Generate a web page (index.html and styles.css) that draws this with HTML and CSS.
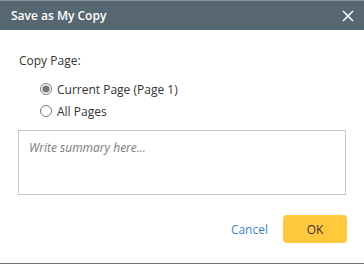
FILE: index.html
```html
<!DOCTYPE html>
<html lang="en">
<head>
    <meta charset="UTF-8">
    <title>Save as My Copy</title>
    <link rel="stylesheet" href="styles.css">
</head>
<body>
    <div class="dialog">
        <div class="dialog-header">
            <span class="dialog-title">Save as My Copy</span>
            <button class="close-button" aria-label="Close">
                <svg width="12" height="12" viewBox="0 0 12 12"><path d="M1 1L11 11M11 1L1 11" stroke="#fff" stroke-width="1.5"/></svg>
            </button>
        </div>
        <div class="dialog-body">
            <p class="field-label">Copy Page:</p>
            <div class="radio-group">
                <label class="radio-row"><input type="radio" name="page" checked> Current Page (Page 1)</label>
                <label class="radio-row"><input type="radio" name="page"> All Pages</label>
            </div>
            <textarea class="summary" placeholder="Write summary here..."></textarea>
        </div>
        <div class="dialog-footer">
            <button class="cancel-button">Cancel</button>
            <button class="ok-button">OK</button>
        </div>
    </div>
</body>
</html>
```

FILE: styles.css
```css
body {
    margin: 0;
    font-family: "Open Sans", Arial, sans-serif;
    background-color: #fff;
}
.dialog {
    width: 364px;
    height: 264px;
    border-top: 1px solid #8a969e;
    border-bottom: 1px solid #6d7377;
    box-sizing: border-box;
    display: flex;
    flex-direction: column;
}
.dialog-header {
    background-color: #566771;
    height: 29px;
    display: flex;
    align-items: center;
    justify-content: space-between;
    padding: 0 8px 0 11px;
}
.dialog-title {
    color: #fff;
    font-size: 12px;
    font-weight: 600;
}
.close-button {
    background: none;
    border: none;
    padding: 0;
    width: 16px;
    height: 16px;
    display: flex;
    align-items: center;
    justify-content: center;
    cursor: pointer;
}
.dialog-body {
    padding: 22px 18px 0 18px;
}
.field-label {
    margin: 0 0 0 1px;
    font-size: 12px;
    color: #333;
}
.radio-group {
    margin-top: 9px;
    padding-left: 22px;
}
.radio-row {
    display: flex;
    align-items: center;
    font-size: 12px;
    color: #333;
    height: 22px;
}
.radio-row input {
    margin: 0 5px 0 0;
    width: 12px;
    height: 12px;
    accent-color: #777;
}
.summary {
    display: block;
    margin-top: 8px;
    width: 328px;
    height: 65px;
    box-sizing: border-box;
    border: 1px solid #c8c8c8;
    padding: 8px 10px;
    font-family: "Open Sans", Arial, sans-serif;
    font-size: 12px;
    resize: none;
}
.summary::placeholder {
    color: #7a7a7a;
    font-style: italic;
}
.dialog-footer {
    display: flex;
    justify-content: flex-end;
    align-items: center;
    gap: 15px;
    padding: 20px 17px 0 0;
}
.cancel-button {
    background: none;
    border: none;
    color: #3f7fbf;
    font-family: "Open Sans", Arial, sans-serif;
    font-size: 12px;
    padding: 0;
    cursor: pointer;
}
.ok-button {
    background-color: #ffc83d;
    border: none;
    border-radius: 4px;
    width: 64px;
    height: 28px;
    font-family: "Open Sans", Arial, sans-serif;
    font-size: 12px;
    color: #333;
    cursor: pointer;
}
```
